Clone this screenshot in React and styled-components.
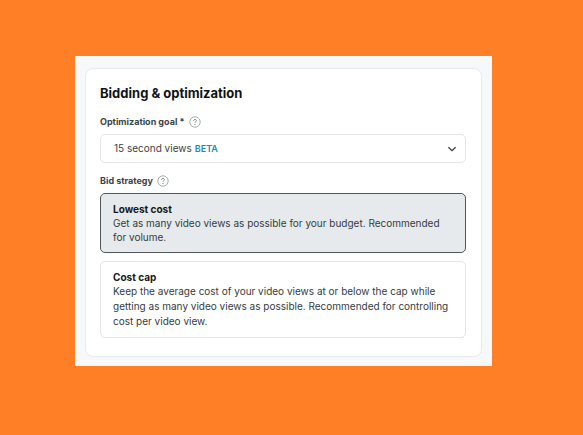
import { useState } from "react";
import styled, { createGlobalStyle } from "styled-components";

const strategies = [
    {
        id: "lowest-cost",
        title: "Lowest cost",
        text: "Get as many video views as possible for your budget. Recommended for volume.",
        lineHeight: 14,
    },
    {
        id: "cost-cap",
        title: "Cost cap",
        text: "Keep the average cost of your video views at or below the cap while getting as many video views as possible. Recommended for controlling cost per video view.",
        lineHeight: 15,
    },
];

function HelpIcon() {
    return (
        <svg width="12" height="12" viewBox="0 0 12 12" fill="none" aria-hidden="true">
            <circle cx="6" cy="6" r="5.2" stroke="#8f9899" strokeWidth="0.8" />
            <path
                d="M4.6 4.8C4.6 3.9 5.2 3.4 6 3.4S7.4 3.9 7.4 4.7C7.4 5.6 6 5.7 6 6.8"
                stroke="#7d8586"
                strokeWidth="0.9"
            />
            <circle cx="6" cy="8.4" r="0.6" fill="#7d8586" />
        </svg>
    );
}

function App() {
    const [goal, setGoal] = useState("15 second views");
    const [strategy, setStrategy] = useState("lowest-cost");

    return (
        <>
            <GlobalStyle />
            <Page>
                <Panel>
                    <Card>
                        <Title>Bidding & optimization</Title>
                        <LabelRow>
                            <Label htmlFor="goal">Optimization goal *</Label>
                            <HelpButton type="button" aria-label="About optimization goal">
                                <HelpIcon />
                            </HelpButton>
                        </LabelRow>
                        <SelectBox>
                            <Select id="goal" value={goal} onChange={(e) => setGoal(e.target.value)}>
                                <option>15 second views</option>
                                <option>6 second views</option>
                            </Select>
                            <SelectValue aria-hidden="true">
                                {goal}
                                <Beta>BETA</Beta>
                            </SelectValue>
                            <Chevron viewBox="0 0 10 10" aria-hidden="true">
                                <path d="M1.4 3.2L5 6.7L8.6 3.2" />
                            </Chevron>
                        </SelectBox>
                        <LabelRow>
                            <Label as="span" id="strategy-label">
                                Bid strategy
                            </Label>
                            <HelpButton type="button" aria-label="About bid strategy">
                                <HelpIcon />
                            </HelpButton>
                        </LabelRow>
                        <Options role="radiogroup" aria-labelledby="strategy-label">
                            {strategies.map((item) => (
                                <Option key={item.id} $selected={strategy === item.id}>
                                    <Radio
                                        type="radio"
                                        name="strategy"
                                        value={item.id}
                                        checked={strategy === item.id}
                                        onChange={() => setStrategy(item.id)}
                                    />
                                    <OptionTitle>{item.title}</OptionTitle>
                                    <OptionText $lineHeight={item.lineHeight}>{item.text}</OptionText>
                                </Option>
                            ))}
                        </Options>
                    </Card>
                </Panel>
            </Page>
        </>
    );
}

export default App;

const GlobalStyle = createGlobalStyle`
    * {
        box-sizing: border-box;
    }

    body {
        margin: 0;
        background-color: #ff7f27;
        font-family: Inter, "Liberation Sans", sans-serif;
    }
`;

const Page = styled.main`
    padding: 56px 91px 69px 75px;
`;

const Panel = styled.div`
    padding: 12px 10px 9px;
    background-color: #f6f8f9;
`;

const Card = styled.section`
    padding: 15px 15px 18px 14px;
    border: 1px solid #e8ebed;
    border-radius: 8px;
    background-color: white;
`;

const Title = styled.h1`
    margin: 0 0 12px;
    font-size: 13px;
    line-height: 18px;
    font-weight: 700;
    color: #101314;
`;

const LabelRow = styled.div`
    display: flex;
    align-items: center;
    gap: 4px;
    height: 16px;
    margin-bottom: 4px;
`;

const Label = styled.label`
    font-size: 9px;
    line-height: 16px;
    font-weight: 700;
    color: #3c4245;
`;

const HelpButton = styled.button`
    display: flex;
    padding: 0;
    border: none;
    background: none;
    cursor: pointer;
`;

const SelectBox = styled.div`
    display: grid;
    align-items: center;
    margin-bottom: 10px;

    & > * {
        grid-area: 1 / 1;
    }
`;

const Select = styled.select`
    appearance: none;
    width: 100%;
    height: 29px;
    padding: 0 13px;
    border: 1px solid #e4e7e9;
    border-radius: 5px;
    background-color: white;
    font: inherit;
    font-size: 10px;
    color: transparent;
    cursor: pointer;

    option {
        color: #3c4245;
    }
`;

const SelectValue = styled.span`
    display: flex;
    align-items: baseline;
    gap: 3px;
    padding-left: 14px;
    font-size: 10px;
    line-height: 16px;
    color: #3c4245;
    pointer-events: none;
`;

const Beta = styled.span`
    font-size: 9px;
    font-weight: 600;
    color: #2488b5;
`;

const Chevron = styled.svg`
    justify-self: end;
    width: 10px;
    height: 10px;
    margin-right: 9px;
    fill: none;
    stroke: #34393c;
    stroke-width: 1.2;
    pointer-events: none;
`;

const Options = styled.div`
    display: flex;
    flex-direction: column;
    gap: 8px;
`;

const Option = styled.label`
    position: relative;
    display: flex;
    flex-direction: column;
    padding: 8px 12px;
    border: 1px solid ${(props) => (props.$selected ? "#50565a" : "#e4e7e9")};
    border-radius: 5px;
    background-color: ${(props) => (props.$selected ? "#e6eaed" : "white")};
    cursor: pointer;
`;

const Radio = styled.input`
    position: absolute;
    margin: 0;
    opacity: 0;
`;

const OptionTitle = styled.span`
    font-size: 10px;
    line-height: 14px;
    font-weight: 700;
    color: #16191b;
`;

const OptionText = styled.span`
    font-size: 10px;
    line-height: ${(props) => props.$lineHeight}px;
    color: #353b3e;
`;
